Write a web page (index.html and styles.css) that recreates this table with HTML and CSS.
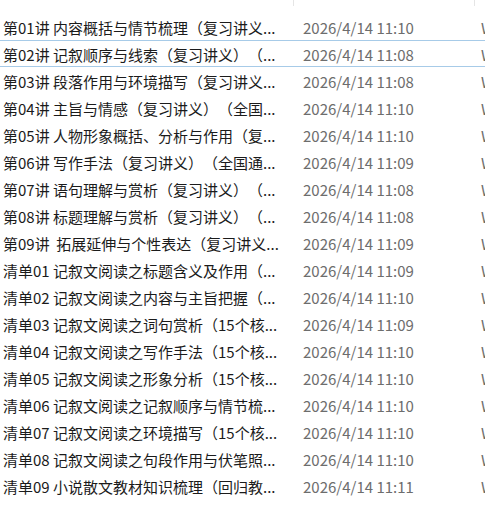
FILE: index.html
```html
<!DOCTYPE html>
<html lang="zh-CN">
<head>
    <meta charset="UTF-8">
    <meta name="viewport" content="width=device-width, initial-scale=1.0">
    <title>文件列表</title>
    <link rel="stylesheet" href="styles.css">
</head>
<body>

<div class="explorer">
    <!-- Column header (scrolled mostly out of view) -->
    <div class="header">
        <div class="col-head name"></div>
        <div class="col-head date"></div>
        <div class="col-head type"></div>
    </div>

    <!-- File rows -->
    <div class="rows">
        <div class="row"><span class="name">第01讲 内容概括与情节梳理（复习讲义...</span><span class="date">2026/4/14 11:10</span><span class="type">Word 文档</span></div>
        <div class="row focused"><span class="name">第02讲 记叙顺序与线索（复习讲义）（...</span><span class="date">2026/4/14 11:08</span><span class="type">Word 文档</span></div>
        <div class="row"><span class="name">第03讲 段落作用与环境描写（复习讲义...</span><span class="date">2026/4/14 11:08</span><span class="type">Word 文档</span></div>
        <div class="row"><span class="name">第04讲 主旨与情感（复习讲义）（全国...</span><span class="date">2026/4/14 11:10</span><span class="type">Word 文档</span></div>
        <div class="row"><span class="name">第05讲 人物形象概括、分析与作用（复...</span><span class="date">2026/4/14 11:10</span><span class="type">Word 文档</span></div>
        <div class="row"><span class="name">第06讲 写作手法（复习讲义）（全国通...</span><span class="date">2026/4/14 11:09</span><span class="type">Word 文档</span></div>
        <div class="row"><span class="name">第07讲 语句理解与赏析（复习讲义）（...</span><span class="date">2026/4/14 11:08</span><span class="type">Word 文档</span></div>
        <div class="row"><span class="name">第08讲 标题理解与赏析（复习讲义）（...</span><span class="date">2026/4/14 11:08</span><span class="type">Word 文档</span></div>
        <div class="row"><span class="name">第09讲&nbsp; 拓展延伸与个性表达（复习讲义...</span><span class="date">2026/4/14 11:09</span><span class="type">Word 文档</span></div>
        <div class="row"><span class="name">清单01 记叙文阅读之标题含义及作用（...</span><span class="date">2026/4/14 11:09</span><span class="type">Word 文档</span></div>
        <div class="row"><span class="name">清单02 记叙文阅读之内容与主旨把握（...</span><span class="date">2026/4/14 11:10</span><span class="type">Word 文档</span></div>
        <div class="row"><span class="name">清单03 记叙文阅读之词句赏析（15个核...</span><span class="date">2026/4/14 11:09</span><span class="type">Word 文档</span></div>
        <div class="row"><span class="name">清单04 记叙文阅读之写作手法（15个核...</span><span class="date">2026/4/14 11:10</span><span class="type">Word 文档</span></div>
        <div class="row"><span class="name">清单05 记叙文阅读之形象分析（15个核...</span><span class="date">2026/4/14 11:10</span><span class="type">Word 文档</span></div>
        <div class="row"><span class="name">清单06 记叙文阅读之记叙顺序与情节梳...</span><span class="date">2026/4/14 11:10</span><span class="type">Word 文档</span></div>
        <div class="row"><span class="name">清单07 记叙文阅读之环境描写（15个核...</span><span class="date">2026/4/14 11:10</span><span class="type">Word 文档</span></div>
        <div class="row"><span class="name">清单08 记叙文阅读之句段作用与伏笔照...</span><span class="date">2026/4/14 11:10</span><span class="type">Word 文档</span></div>
        <div class="row"><span class="name">清单09 小说散文教材知识梳理（回归教...</span><span class="date">2026/4/14 11:11</span><span class="type">Word 文档</span></div>
    </div>
</div>

</body>
</html>
```

FILE: styles.css
```css
body {
    margin: 0;
    padding: 0;
    background-color: #fff;
    font-family: "Noto Sans CJK SC", sans-serif;
    font-size: 15px;
    text-spacing-trim: space-all;
    overflow: hidden;
}
.explorer {
    width: 700px;
}
.header {
    display: grid;
    grid-template-columns: 294px 181px 1fr;
    height: 6px;
    margin-bottom: 7px;
}
.col-head {
    border-right: 1px solid #e5e5e5;
}
.col-head.type {
    border-right: none;
}
.row {
    display: grid;
    grid-template-columns: 294px 181px 1fr;
    height: 27px;
    box-sizing: border-box;
    padding-top: 2px;
    border-top: 1px solid transparent;
    border-bottom: 1px solid transparent;
    align-items: center;
    line-height: 23px;
    white-space: nowrap;
}
.row.focused {
    border-top-color: #a7cbe8;
    border-bottom-color: #a7cbe8;
}
.row .name {
    padding-left: 3px;
    color: #1b1b1b;
    overflow: hidden;
}
.row .date {
    padding-left: 9px;
    color: #6d6d6d;
}
.row .type {
    padding-left: 6px;
    color: #6d6d6d;
}
```
